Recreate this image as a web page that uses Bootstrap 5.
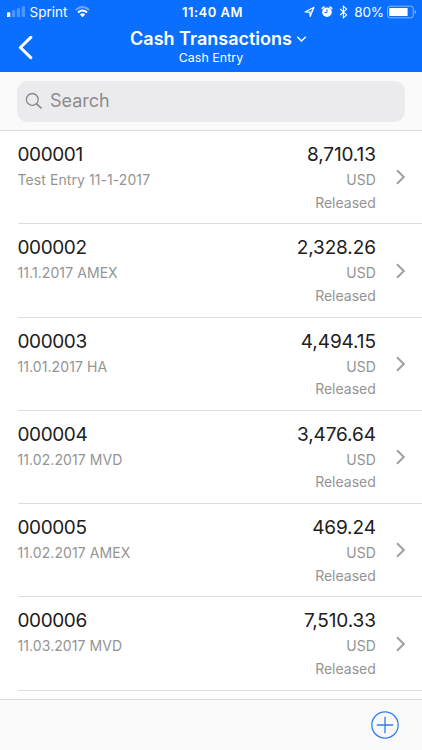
<!DOCTYPE html>
<html lang="en">
<head>
<meta charset="utf-8">
<meta name="viewport" content="width=device-width, initial-scale=1">
<title>Cash Transactions</title>
<link href="https://cdn.jsdelivr.net/npm/bootstrap@5.3.0/dist/css/bootstrap.min.css" rel="stylesheet">
<style>
body{font-family:Inter,"Liberation Sans",sans-serif;color:#202020;height:750px;overflow:hidden}
svg{display:block;flex:none}
.top{background:#0a6eff;height:72px}
.status{height:24px;font-size:13.5px;line-height:24px}
.side{width:150px}
.signal{margin:0 2.5px 0 7px}
.clock{font-weight:600;font-size:13px;letter-spacing:.5px;padding-left:3px}
.percent{margin-left:3px;letter-spacing:-.1px}
.battery{margin-left:3px}
.titles{height:48px}
.back{width:60px;padding:12px 0 0 17.5px}
.balance{width:60px}
.heading{font-size:18px;font-weight:600;line-height:22px;padding:4px 0 0 15px}
.subtitle{font-size:12.3px;line-height:15px;letter-spacing:.1px}
.searchbar{height:59px;background:#fafafa;border-bottom:1px solid #dededf;padding:9.3px 17px 0}
.field{height:40.5px;border-radius:11px;background:#ebebed;color:#8b8b90;font-size:18px;padding:0 0 2px 8px}
.search-text{margin-left:7px}
.entries{height:568px;padding-left:17.5px}
.entry{height:93.25px;border-bottom:1px solid #dededf;padding:12.2px 16.5px 0 0}
.main-line{font-size:19px;line-height:24px;letter-spacing:-.4px}
.text-end .main-line{letter-spacing:-.12px}
.sub-line{font-size:14px;line-height:22.5px;color:#949494}
.first-sub{padding-top:2px}
.flex-fill .sub-line{letter-spacing:.08px}
.go{margin:26.2px 0 0 18.7px}
.toolbar{height:51px;background:#fafafa;border-top:1px solid #dadada;padding:11px 23.5px 0 0}
</style>
<script src="https://cdn.jsdelivr.net/npm/bootstrap@5.3.0/dist/js/bootstrap.bundle.min.js"></script>
</head>
<body class="d-flex flex-column bg-white">
<header class="top text-white flex-shrink-0">
  <div class="status d-flex justify-content-between">
    <div class="side d-flex align-items-center">
      <svg class="signal" width="20" height="24" viewBox="0 0 20 24" fill="#fff"><rect x="0" y="12.3" width="3.3" height="4.8" rx=".6"/><g opacity=".28"><rect x="4.9" y="10.3" width="3.3" height="6.8" rx=".6"/><rect x="9.8" y="8.3" width="3.3" height="8.8" rx=".6"/><rect x="14.7" y="6.3" width="3.3" height="10.8" rx=".6"/></g></svg>
      <span>Sprint</span>
      <svg class="ms-2" width="15" height="24" viewBox="0 0 15 24" fill="none" stroke="#fff" stroke-width="2"><path d="M.8 9.9Q7.5 4.1 14.2 9.9" opacity=".4"/><path d="M3 12.4Q7.5 8.6 12 12.4"/><path d="M7.5 17.2 4.9 14.4Q7.5 12.2 10.1 14.4Z" fill="#fff" stroke="none"/></svg>
    </div>
    <span class="clock">11:40 AM</span>
    <div class="side d-flex align-items-center justify-content-end pe-1">
      <svg width="48" height="24" viewBox="0 0 48 24" fill="none" stroke="#fff"><path d="M2 12 11 7.3 7.2 16.6 6.8 12.1Z" stroke-width="1.1" stroke-linejoin="round"/><path d="M6.8 12.1 11 7.3 7.2 16.6Z" fill="#fff" opacity=".5" stroke="none"/><circle cx="24" cy="12.2" r="4.8" fill="#fff" stroke="none"/><path d="M19.2 9.2a2.5 2.5 0 0 1 2.5-2.3M28.8 9.2a2.5 2.5 0 0 0-2.5-2.3" stroke-width="1.5"/><path d="M24 9.4v3.1h-2.5" stroke="#0a6eff" stroke-width="1"/><path d="M37.2 9 43.6 14.9 40.4 17.8V6.2L43.6 9.1 37.2 15" stroke-width="1.1"/></svg>
      <span class="percent">80%</span>
      <svg class="battery" width="31" height="24" viewBox="0 0 31 24" fill="none"><rect x=".6" y="6.2" width="25.6" height="11.6" rx="2.4" stroke="#fff" opacity=".5"/><rect x="2.2" y="7.9" width="18.4" height="8.2" rx=".7" fill="#fff"/><path d="M27.6 10v4q1.5-.7 1.5-2t-1.5-2" fill="#fff" opacity=".5"/></svg>
    </div>
  </div>
  <div class="titles d-flex">
    <div class="back"><svg width="15" height="24" viewBox="0 0 15 24" fill="none" stroke="#fff" stroke-width="3" stroke-linecap="round" stroke-linejoin="round"><path d="M12.8 1.4 2.4 11.5 12.8 21.6"/></svg></div>
    <div class="flex-fill text-center">
      <div class="heading d-flex align-items-center justify-content-center"><span>Cash Transactions</span><svg class="ms-1" width="11" height="10" viewBox="0 0 11 10" fill="none" stroke="#fff" stroke-width="1.5" stroke-linecap="round"><path d="m1.7 3.2 3.8 3.8 3.8-3.8"/></svg></div>
      <div class="subtitle">Cash Entry</div>
    </div>
    <div class="balance"></div>
  </div>
</header>
<section class="searchbar flex-shrink-0">
  <div class="field d-flex align-items-center"><svg width="18" height="18" viewBox="0 0 18 18" fill="none" stroke="#87878b" stroke-width="1.3"><circle cx="7.3" cy="7.4" r="5.9"/><path d="m11.6 11.8 5 4.7" stroke-width="1.7"/></svg><span class="search-text">Search</span></div>
</section>
<main class="entries flex-shrink-0">
  <div class="entry d-flex"><div class="flex-fill"><div class="main-line">000001</div><div class="sub-line first-sub">Test Entry 11-1-2017</div></div><div class="text-end"><div class="main-line">8,710.13</div><div class="sub-line first-sub">USD</div><div class="sub-line">Released</div></div><svg class="go" width="11" height="16" viewBox="0 0 11 16" fill="none" stroke="#a0a0a3" stroke-width="2"><path d="M2 1.3 8.8 8 2 14.7"/></svg></div>
  <div class="entry d-flex"><div class="flex-fill"><div class="main-line">000002</div><div class="sub-line first-sub">11.1.2017 AMEX</div></div><div class="text-end"><div class="main-line">2,328.26</div><div class="sub-line first-sub">USD</div><div class="sub-line">Released</div></div><svg class="go" width="11" height="16" viewBox="0 0 11 16" fill="none" stroke="#a0a0a3" stroke-width="2"><path d="M2 1.3 8.8 8 2 14.7"/></svg></div>
  <div class="entry d-flex"><div class="flex-fill"><div class="main-line">000003</div><div class="sub-line first-sub">11.01.2017 HA</div></div><div class="text-end"><div class="main-line">4,494.15</div><div class="sub-line first-sub">USD</div><div class="sub-line">Released</div></div><svg class="go" width="11" height="16" viewBox="0 0 11 16" fill="none" stroke="#a0a0a3" stroke-width="2"><path d="M2 1.3 8.8 8 2 14.7"/></svg></div>
  <div class="entry d-flex"><div class="flex-fill"><div class="main-line">000004</div><div class="sub-line first-sub">11.02.2017 MVD</div></div><div class="text-end"><div class="main-line">3,476.64</div><div class="sub-line first-sub">USD</div><div class="sub-line">Released</div></div><svg class="go" width="11" height="16" viewBox="0 0 11 16" fill="none" stroke="#a0a0a3" stroke-width="2"><path d="M2 1.3 8.8 8 2 14.7"/></svg></div>
  <div class="entry d-flex"><div class="flex-fill"><div class="main-line">000005</div><div class="sub-line first-sub">11.02.2017 AMEX</div></div><div class="text-end"><div class="main-line">469.24</div><div class="sub-line first-sub">USD</div><div class="sub-line">Released</div></div><svg class="go" width="11" height="16" viewBox="0 0 11 16" fill="none" stroke="#a0a0a3" stroke-width="2"><path d="M2 1.3 8.8 8 2 14.7"/></svg></div>
  <div class="entry d-flex"><div class="flex-fill"><div class="main-line">000006</div><div class="sub-line first-sub">11.03.2017 MVD</div></div><div class="text-end"><div class="main-line">7,510.33</div><div class="sub-line first-sub">USD</div><div class="sub-line">Released</div></div><svg class="go" width="11" height="16" viewBox="0 0 11 16" fill="none" stroke="#a0a0a3" stroke-width="2"><path d="M2 1.3 8.8 8 2 14.7"/></svg></div>
</main>
<footer class="toolbar d-flex justify-content-end flex-shrink-0">
  <svg width="28" height="28" viewBox="0 0 28 28" fill="none" stroke="#2f7cf0" stroke-width="1.3"><circle cx="14" cy="14" r="13.2"/><path d="M5.8 14h16.4M14 5.8v16.4"/></svg>
</footer>
</body>
</html>
